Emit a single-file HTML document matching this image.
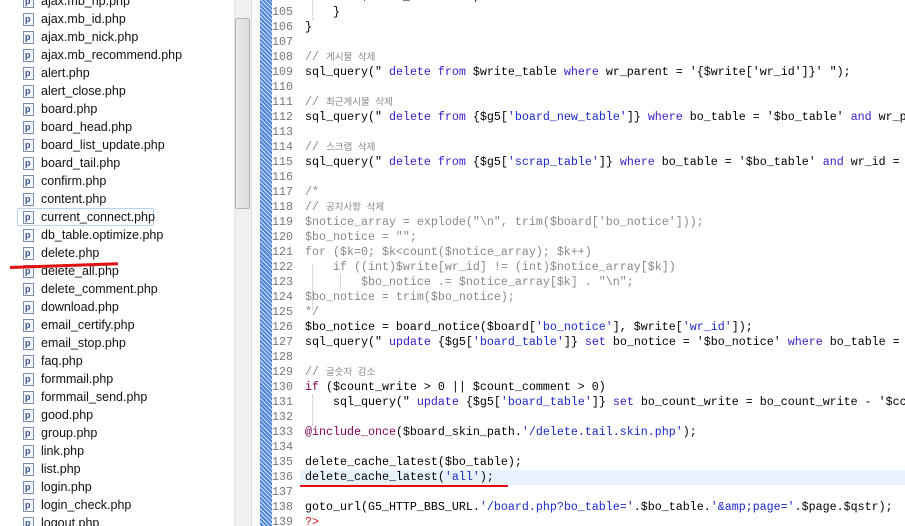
<!DOCTYPE html>
<html><head><meta charset="utf-8">
<style>
html,body{margin:0;padding:0;width:905px;height:526px;overflow:hidden;background:#fff;position:relative}
#files{position:absolute;left:0;top:0;width:234px;height:526px;background:#fff;font-family:"Liberation Sans","Noto Sans CJK KR",sans-serif;font-size:12.5px;color:#111}
.f{position:absolute;left:0;height:18px;line-height:18px;white-space:nowrap}
.f .ic{position:absolute;left:23px;top:3px;width:9px;height:11px;border:1px solid #7d8fb0;background:#f3f6fb}
.f .ic:after{content:"p";position:absolute;left:1px;top:-4px;font-size:9px;font-weight:bold;color:#39568c}
.f .t{position:absolute;left:41px}
.sel{position:absolute;left:17px;width:135px;height:16px;border:1px solid #b8d4ee;border-radius:2px}
#sb{position:absolute;left:234px;top:0;width:16px;height:526px;background:#f0f0f0;border-left:1px solid #e2e2e2}
#thumb{position:absolute;left:235px;top:18px;width:13px;height:189px;background:linear-gradient(90deg,#eaeaea,#dcdcdc);border:1px solid #b5b5b5;border-radius:2px}
#hatch{position:absolute;left:260px;top:0;width:12px;height:526px;background-color:#4f86d8;background-image:repeating-linear-gradient(45deg,rgba(255,255,255,.75) 0 1px,transparent 1px 3px)}
#sep{position:absolute;left:251px;top:0;width:8px;height:526px;background:#fafafa;border-left:1px solid #ddd}
#code{position:absolute;left:0;top:0;font-family:"Liberation Mono","Noto Sans CJK KR",monospace;font-size:11.67px;color:#000}
.l{position:absolute;left:0;height:15px;line-height:15px;white-space:pre;width:905px}
.n{position:absolute;left:272px;color:#787878}
.c{position:absolute;left:305px}
.hl{position:absolute;left:300px;width:605px;height:15px;background:#e8f2fe}
.k{color:#3a18c8}.s{color:#1a2ac8}.m{color:#7f0055}.cm{color:#888}.ko{font-size:9.5px;color:#888}.r{color:#d01010}
.g{position:absolute;border-left:1px dotted #d6a8d6;width:0}
</style></head><body>
<div id="files">
<div class="sel" style="top:208px"></div>
</div>
<div id="sb"></div><div id="thumb"></div>
<div id="sep"></div>
<div id="hatch"></div>
<div class="hl" style="top:470px"></div>
<div id="code"></div>
<div style="position:absolute;left:10px;top:266px;width:108px;height:3px;background:#e01010;transform:rotate(-2deg);transform-origin:left"></div>
<div style="position:absolute;left:300px;top:485px;width:208px;height:2px;background:#e01010"></div>
<script>
var files=["ajax.mb_hp.php","ajax.mb_id.php","ajax.mb_nick.php","ajax.mb_recommend.php","alert.php","alert_close.php","board.php","board_head.php","board_list_update.php","board_tail.php","confirm.php","content.php","current_connect.php","db_table.optimize.php","delete.php","delete_all.php","delete_comment.php","download.php","email_certify.php","email_stop.php","faq.php","formmail.php","formmail_send.php","good.php","group.php","link.php","list.php","login.php","login_check.php","logout.php"];
var h="";files.forEach(function(f,i){h+='<div class="f" style="top:'+(-8+18*i)+'px"><span class="ic"></span><span class="t">'+f+'</span></div>';});
document.getElementById("files").innerHTML+=h;
var L={
104:'        $count_comment++;',
105:'    }',
106:'}',
108:'<span class="cm">// </span><span class="ko">게시물 삭제</span>',
109:'sql_query(" <span class="k">delete from</span> $write_table <span class="k">where</span> wr_parent = \'{$write[\'wr_id\']}\' ");',
111:'<span class="cm">// </span><span class="ko">최근게시물 삭제</span>',
112:'sql_query(" <span class="k">delete from</span> {$g5[<span class="s">\'board_new_table\'</span>]} <span class="k">where</span> bo_table = \'$bo_table\' <span class="k">and</span> wr_parent',
114:'<span class="cm">// </span><span class="ko">스크랩 삭제</span>',
115:'sql_query(" <span class="k">delete from</span> {$g5[<span class="s">\'scrap_table\'</span>]} <span class="k">where</span> bo_table = \'$bo_table\' <span class="k">and</span> wr_id = ',
117:'<span class="cm">/*</span>',
118:'<span class="cm">// </span><span class="ko">공지사항 삭제</span>',
119:'<span class="cm">$notice_array = explode("\\n", trim($board[\'bo_notice\']));</span>',
120:'<span class="cm">$bo_notice = "";</span>',
121:'<span class="cm">for ($k=0; $k&lt;count($notice_array); $k++)</span>',
122:'<span class="cm">    if ((int)$write[wr_id] != (int)$notice_array[$k])</span>',
123:'<span class="cm">        $bo_notice .= $notice_array[$k] . "\\n";</span>',
124:'<span class="cm">$bo_notice = trim($bo_notice);</span>',
125:'<span class="cm">*/</span>',
126:'$bo_notice = board_notice($board[<span class="s">\'bo_notice\'</span>], $write[<span class="s">\'wr_id\'</span>]);',
127:'sql_query(" <span class="k">update</span> {$g5[<span class="s">\'board_table\'</span>]} <span class="k">set</span> bo_notice = \'$bo_notice\' <span class="k">where</span> bo_table = ',
129:'<span class="cm">// </span><span class="ko">글숫자 감소</span>',
130:'<span class="m">if</span> ($count_write &gt; 0 || $count_comment &gt; 0)',
131:'    sql_query(" <span class="k">update</span> {$g5[<span class="s">\'board_table\'</span>]} <span class="k">set</span> bo_count_write = bo_count_write - \'$cc',
133:'<span class="m">@include_once</span>($board_skin_path.<span class="s">\'/delete.tail.skin.php\'</span>);',
135:'delete_cache_latest($bo_table);',
136:'delete_cache_latest(<span class="s">\'all\'</span>);',
138:'goto_url(G5_HTTP_BBS_URL.<span class="s">\'/board.php?bo_table=\'</span>.$bo_table.<span class="s">\'&amp;amp;page=\'</span>.$page.$qstr);',
139:'<span class="r">?&gt;</span>'
};
var c="";
for(var n=104;n<=139;n++){var t=(n-105)*15+5;
c+='<div class="l" style="top:'+t+'px"><span class="n">'+n+'</span><span class="c">'+(L[n]||'')+'</span></div>';}
c+='<div class="g" style="left:312px;top:-10px;height:30px"></div>';
c+='<div class="g" style="left:312px;top:265px;height:45px"></div>';
c+='<div class="g" style="left:340px;top:275px;height:15px"></div>';
c+='<div class="g" style="left:312px;top:395px;height:30px"></div>';
document.getElementById("code").innerHTML=c;
</script>
</body></html>
